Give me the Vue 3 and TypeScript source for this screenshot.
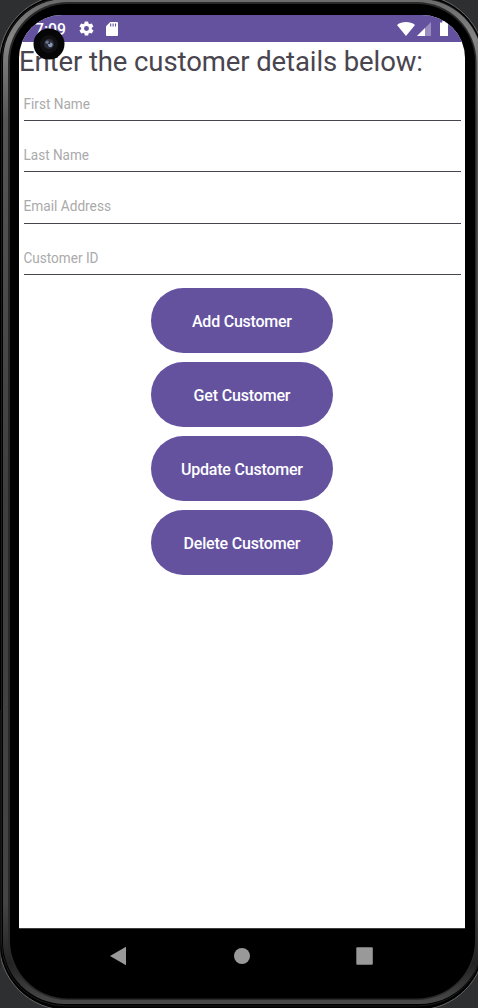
<script setup lang="ts">
const fields: { label: string; width: number }[] = [
  { label: 'First Name', width: 66.5 },
  { label: 'Last Name', width: 65.5 },
  { label: 'Email Address', width: 87.5 },
  { label: 'Customer ID', width: 75 },
]
const actions: { label: string; width: number }[] = [
  { label: 'Add Customer', width: 100 },
  { label: 'Get Customer', width: 97 },
  { label: 'Update Customer', width: 122 },
  { label: 'Delete Customer', width: 117 },
]
</script>

<template>
  <main class="device">
    <svg class="frame" viewBox="0 0 478 1008" aria-hidden="true">
      <defs>
        <linearGradient id="metal" x1="0" y1="0" x2="0" y2="1">
          <stop offset="0" stop-color="#6a6a6a" />
          <stop offset=".04" stop-color="#858585" />
          <stop offset=".12" stop-color="#555" />
          <stop offset=".5" stop-color="#3e3e3e" />
          <stop offset=".9" stop-color="#444" />
          <stop offset=".96" stop-color="#222" />
          <stop offset="1" stop-color="#4a4a4a" />
        </linearGradient>
      </defs>
      <rect width="478" height="1008" fill="#2e2f31" />
      <rect x="-1" y="-5" width="486" height="1015" rx="68" fill="#000" stroke="#666" stroke-width="1" />
      <rect x="1.500" y="-2" width="481" height="1008" rx="64" fill="#000" stroke="#1b1b1b" stroke-width="1" />
      <rect x="3" y="-1" width="479" height="1005" rx="62" fill="url(#metal)" />
      <rect x="8" y="2" width="468.500" height="998" rx="60" fill="#292929" />
      <rect x="10" y="4" width="465" height="994.500" rx="58" fill="#000" />
      <path d="M0 710V968" stroke="#202020" />
    </svg>

    <section class="screen">
      <header class="status">
        <span class="clock"><svg width="32" height="18"><text x="0" y="14.500" textLength="31" lengthAdjust="spacingAndGlyphs">7:09</text></svg></span>
        <svg class="gear" viewBox="0 0 24 24"><path fill="#fff" fill-rule="evenodd" d="M19.4 13a7.6 7.6 0 0 0 0-2l2.1-1.6a.5.5 0 0 0 .1-.7l-2-3.4a.5.5 0 0 0-.6-.2l-2.5 1a7.3 7.3 0 0 0-1.7-1l-.4-2.6a.5.5 0 0 0-.5-.5h-4a.5.5 0 0 0-.5.5L9 5.100a7.300 7.300 0 0 0-1.700 1l-2.500-1a.5.5 0 0 0-.6.2l-2 3.400a.5.5 0 0 0 .1.7L4.500 11a7.600 7.600 0 0 0 0 2l-2.100 1.600a.5.5 0 0 0-.1.7l2 3.400c.1.2.4.3.6.2l2.500-1a7.300 7.300 0 0 0 1.700 1l.4 2.600c0 .3.200.5.500.5h4c.3 0 .5-.2.5-.5l.4-2.600a7.300 7.300 0 0 0 1.700-1l2.500 1c.2.1.5 0 .6-.2l2-3.400a.5.5 0 0 0-.1-.7zM12 15.500a3.500 3.500 0 1 1 0-7 3.500 3.500 0 0 1 0 7z" /></svg>
        <svg class="card" viewBox="0 0 12 14"><path fill="#fff" d="M4.200 0H11a1 1 0 0 1 1 1v12a1 1 0 0 1-1 1H1a1 1 0 0 1-1-1V4.200z" /><path stroke="#64529f" stroke-width="1.100" d="M4.700 1.500v3M7.100 1.500v3M9.500 1.500v3" /></svg>
        <span class="grow"></span>
        <svg class="wifi" viewBox="0 0 18 14"><path fill="#fff" d="M0 2.900C5-.9 13-.9 18 2.900L9 14z" /></svg>
        <svg class="signal" viewBox="0 0 14 14"><path fill="#fff" opacity=".35" d="M14 0v14H0z" /><path fill="#fff" d="M8 6v8H0z" /></svg>
        <svg class="battery" viewBox="0 0 8 15"><path fill="#fff" d="M2.300 0h3.400v1.400H8V15H0V1.400h2.300z" /></svg>
      </header>

      <h1 class="title"><svg width="446" height="42"><text x="0" y="29.300" textLength="404">Enter the customer details below:</text></svg></h1>

      <form class="form" @submit.prevent>
        <label v-for="field in fields" :key="field.label" class="field">
          <svg width="120" height="20"><text x="-0.500" y="15" :textLength="field.width" lengthAdjust="spacingAndGlyphs">{{ field.label }}</text></svg>
        </label>
        <div class="actions">
          <button v-for="action in actions" :key="action.label" class="action" type="button">
            <svg width="182" height="24"><text x="91" y="18" text-anchor="middle" :textLength="action.width">{{ action.label }}</text></svg>
          </button>
        </div>
      </form>
    </section>

    <nav class="nav">
      <svg width="446" height="56" fill="#999">
        <path d="M91 28 L107 18.700V37.300z" />
        <circle cx="223" cy="28" r="8" />
        <rect x="337.300" y="19.200" width="16.500" height="17.500" rx="1" />
      </svg>
    </nav>

    <svg class="camera" viewBox="0 0 32 32">
      <circle cx="16" cy="16" r="15.500" fill="#060606" />
      <circle cx="16" cy="16" r="9" fill="#111114" />
      <circle cx="16" cy="16" r="5" fill="#2b2e38" />
      <circle cx="14.200" cy="14.200" r="1.800" fill="#69758a" />
      <circle cx="17.300" cy="16.800" r="2.400" fill="#8b99bb" />
      <circle cx="16.200" cy="15.200" r="1" fill="#242733" />
    </svg>
  </main>
</template>

<style>
body {
  margin: 0;
  background: #2e2f31;
}
</style>

<style scoped>
.device {
  position: relative;
  box-sizing: border-box;
  width: 478px;
  height: 1008px;
  padding: 15px 13px 0 19px;
  overflow: hidden;
  font-family: Roboto, sans-serif;
}
svg {
  display: block;
  flex: none;
}
.frame {
  position: absolute;
  left: 0;
  top: 0;
  width: 478px;
  height: 1008px;
}
.screen {
  position: relative;
  width: 446px;
  height: 913px;
  overflow: hidden;
  border-radius: 43px 43px 0 0;
  background: #fff;
}
.status {
  display: flex;
  box-sizing: border-box;
  height: 27px;
  padding: 0 17px 0 16px;
  align-items: center;
  background: #64529f;
}
.clock text {
  font-size: 16px;
  font-weight: 500;
  fill: #fff;
}
.gear {
  width: 17px;
  height: 17px;
  margin-left: 11px;
}
.card {
  width: 12px;
  height: 14px;
  margin-left: 11px;
}
.grow {
  flex: 1;
}
.wifi {
  width: 18px;
  height: 14px;
}
.signal {
  width: 14px;
  height: 14px;
  margin-left: 2px;
}
.battery {
  width: 8px;
  height: 15px;
  margin-left: 9px;
}
.title {
  height: 42px;
  margin: 0;
}
.title text {
  font-size: 27.5px;
  font-weight: 400;
  fill: #49454f;
}
.form {
  padding: 0 4px;
}
.field {
  display: block;
  box-sizing: border-box;
  height: 40.3px;
  margin: 0 0 11px 1px;
  padding-top: 13px;
  border-bottom: 1px solid #49454f;
}
.field:first-child {
  height: 37px;
  padding-top: 10px;
}
.field text {
  font-size: 14px;
  fill: #aaa;
}
.actions {
  display: flex;
  flex-direction: column;
  align-items: center;
  gap: 9.300px;
  padding-top: 2.500px;
}
.action {
  display: flex;
  width: 182px;
  height: 64.700px;
  padding: 0;
  align-items: center;
  justify-content: center;
  border: 0;
  border-radius: 33px;
  background: #64529f;
}
.action text {
  font-family: Roboto, sans-serif;
  font-size: 16px;
  font-weight: 500;
  fill: #fff;
}
.nav {
  position: relative;
  box-sizing: border-box;
  height: 56px;
  box-shadow: inset 0 1px #3c3c3c;
}
.camera {
  position: absolute;
  left: 33px;
  top: 28px;
  width: 32px;
  height: 32px;
}
</style>
